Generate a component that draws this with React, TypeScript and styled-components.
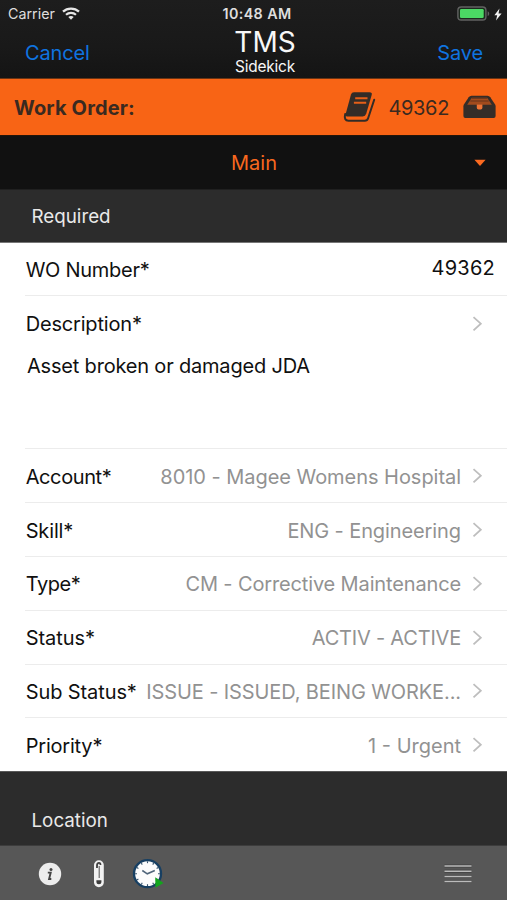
import React from 'react';
import styled, { createGlobalStyle } from 'styled-components';

const GlobalStyle = createGlobalStyle`
  * { box-sizing: border-box; }
  body { margin: 0; background: #fff; }
  svg { display: block; flex: none; }
`;

const Screen = styled.main`
  width: 507px;
  height: 900px;
  display: flex;
  flex-direction: column;
  overflow: hidden;
  font-family: Inter, 'Liberation Sans', sans-serif;
  font-size: 20px;
  line-height: 24px;
  white-space: nowrap;
  color: #101010;
`;

const Header = styled.header`
  height: 79px;
  flex: none;
  background: linear-gradient(#1d1d1d, #191919 60%, #141414);
  border-bottom: 1px solid #6b3413;
`;

const StatusBar = styled.div`
  height: 27px;
  display: grid;
  grid-template-columns: 1fr auto 1fr;
  align-items: center;
  padding: 1px 5px 0 8px;
  font-size: 14.3px;
  line-height: 18px;
  color: #dedede;
`;

const StatusGroup = styled.div<{ $end?: boolean }>`
  display: flex;
  align-items: center;
  gap: ${(p) => (p.$end ? 4 : 7)}px;
  justify-content: ${(p) => (p.$end ? 'flex-end' : 'flex-start')};
`;

const Clock = styled.span`
  padding-left: 4px;
  font-weight: 600;
  letter-spacing: 0.4px;
`;

const NavBar = styled.nav`
  height: 51px;
  display: grid;
  grid-template-columns: 1fr auto 1fr;
  padding: 0 24px 0 25px;
`;

const NavButton = styled.button<{ $end?: boolean }>`
  justify-self: ${(p) => (p.$end ? 'end' : 'start')};
  height: 51px;
  padding: 0;
  border: 0;
  background: none;
  font: inherit;
  letter-spacing: -0.15px;
  color: #0f74e0;
`;

const TitleStack = styled.div`
  display: flex;
  flex-direction: column;
  align-items: center;
  padding-left: 22px;
  color: #f7f7f7;
`;

const Title = styled.h1`
  margin: 0;
  font-size: 28px;
  line-height: 30px;
  font-weight: 400;
  letter-spacing: 0;
`;

const Subtitle = styled.span`
  font-size: 15.4px;
  line-height: 18px;
  margin-top: 1px;
  letter-spacing: -0.2px;
`;

const OrderBar = styled.section`
  height: 56px;
  flex: none;
  display: flex;
  align-items: center;
  padding: 0 11px 0 14px;
  background: #f86415;
  color: #3a2a20;
`;

const OrderTitle = styled.h2`
  flex: 1;
  margin: 0;
  padding-top: 1px;
  font-size: 20px;
  font-weight: 700;
  letter-spacing: 0.15px;
`;

const OrderNumber = styled.span`
  margin: 0 14px 0 12px;
  padding-top: 1px;
  letter-spacing: -0.35px;
`;

const TabPicker = styled.div`
  height: 54px;
  flex: none;
  display: grid;
  grid-template-columns: 1fr auto 1fr;
  align-items: center;
  padding: 1px 21px 0 22px;
  background: #111;
  border-top: 1px solid #241509;
  color: #f8681f;
  svg { justify-self: end; }
`;

const SectionHeader = styled.h3<{ $tall?: boolean }>`
  height: ${(p) => (p.$tall ? 75 : 54)}px;
  flex: none;
  margin: 0;
  padding: ${(p) => (p.$tall ? '37px' : '15px')} 0 0 31.5px;
  background: #2c2c2c;
  border-top: 1px solid ${(p) => (p.$tall ? '#595959' : '#202020')};
  border-bottom: 1px solid ${(p) => (p.$tall ? '#3d3d3d' : '#777')};
  font-size: 18.8px;
  font-weight: 400;
  color: #e9e9e9;
`;

const Form = styled.div`
  flex: none;
  background: #fff;
`;

const Row = styled.div<{ $height: number; $last?: boolean }>`
  height: ${(p) => p.$height}px;
  margin-left: 25px;
  padding-right: 24px;
  display: flex;
  align-items: center;
  border-bottom: ${(p) => (p.$last ? 0 : 1)}px solid #ececec;
`;

const Label = styled.span<{ $tracking?: number; $drop?: number }>`
  flex: 1;
  padding: ${(p) => p.$drop ?? 1}px 0 0 0.7px;
  letter-spacing: ${(p) => p.$tracking ?? 0}px;
`;

const Value = styled.span<{ $tracking?: number; $drop?: number }>`
  padding-top: ${(p) => p.$drop ?? 1}px;
  margin-right: 11px;
  letter-spacing: ${(p) => p.$tracking ?? 0}px;
  color: #929292;
`;

const NumberValue = styled.span`
  margin: 0 -12px 2px 0;
  letter-spacing: 0.25px;
`;

const DescriptionBlock = styled.div`
  height: 153px;
  margin-left: 25px;
  border-bottom: 1px solid #ececec;
`;

const DescriptionHead = styled.div`
  height: 56px;
  display: flex;
  align-items: center;
  padding-right: 24px;
`;

const DescriptionText = styled.p`
  margin: 2px 0 0 2px;
  letter-spacing: -0.19px;
`;

const Toolbar = styled.footer`
  flex: 1;
  display: flex;
  align-items: center;
  padding: 2px 35px 0 38px;
  background: #575757;
`;

const ToolButton = styled.button<{ $before?: number; $push?: boolean }>`
  padding: 0;
  border: 0;
  background: none;
  margin-left: ${(p) => (p.$push ? 'auto' : `${p.$before ?? 0}px`)};
`;

const WifiIcon = () => (
  <svg width="18" height="15" viewBox="0 0 18 15" fill="none" stroke="#e6e6e6">
    <path d="M1 4.6C5.4.5 12.6.5 17 4.6" strokeWidth="2.3" />
    <path d="M4 7.8c2.8-2.5 7.2-2.500 10 0" strokeWidth="2.200" />
    <path d="M6.300 10c1.500-1.300 3.900-1.300 5.400 0L9 12.800z" fill="#e6e6e6" stroke="none" />
  </svg>
);

const BatteryIcon = () => (
  <svg width="33" height="16" viewBox="0 0 33 16">
    <rect x=".9" y="1" width="28" height="13" rx="3.300" fill="#1c2a1e" stroke="#626262" strokeWidth="1.400" />
    <rect x="3" y="3" width="23.700" height="9" rx="1.300" fill="#4bd964" />
    <path d="M30.700 5.200c2 .8 2 4 0 4.800z" fill="#626262" />
  </svg>
);

const BoltIcon = () => (
  <svg width="8" height="13" viewBox="0 0 8 13">
    <path d="M5.500.5.4 7.200h2.800L2 12.500 7.600 5.400H4.500z" fill="#f2f2f2" />
  </svg>
);

const BookIcon = () => (
  <svg width="33" height="32" viewBox="0 0 33 32">
    <path
      d="M11 1.200H26.500q3 0 2.200 2.800L23.200 22.800q-.8 2.600-3.500 2.600H4.200q-2.200 0-1.600-2.200L8 3.500Q8.700 1.200 11 1.200z"
      fill="#332c27"
    />
    <path
      d="M2.200 23q-1.600 6.700 3.300 6.700h16.300q2.500 0 3.300-2.500L31.200 8.800"
      fill="none"
      stroke="#332c27"
      strokeWidth="2"
      strokeLinecap="round"
    />
    <path d="M12.200 7.200h12.300M10.900 11.800h12.300" stroke="#e65f18" strokeWidth="1.900" />
  </svg>
);

const InboxIcon = () => (
  <svg width="33" height="24" viewBox="0 0 33 24">
    <path
      d="M8.500.7h16q1.800 0 2.800 1.500l4.800 7.300q.5.800.5 2v9.500q0 2-2 2H2.400q-2 0-2-2v-9.500q0-1.200.5-2l4.800-7.300Q6.700.7 8.500.7z"
      fill="#352d28"
    />
    <path d="M8.800 2.800h15.400l4.600 7H4.200z" fill="#a24b1d" />
    <path d="M8.800 3.300h15.400M7.300 6h18.400" stroke="#66351d" strokeWidth="1" />
    <path d="M13.800 9.500h5.600v3.300q0 1.700-1.700 1.700h-2.200q-1.700 0-1.700-1.700z" fill="#f07434" />
  </svg>
);

const CaretIcon = () => (
  <svg width="12" height="8" viewBox="0 0 12 8">
    <path d="M.4.700h11.200L6 7z" fill="#fb6a20" />
  </svg>
);

const ChevronIcon = () => (
  <svg width="11" height="18" viewBox="0 0 11 18">
    <path d="M1.500 2.200 8.800 8.700 1.500 15.300" fill="none" stroke="#bebebe" strokeWidth="1.800" />
  </svg>
);

const InfoIcon = () => (
  <svg width="24" height="24" viewBox="0 0 24 24">
    <circle cx="12" cy="12" r="11.200" fill="#ededed" />
    <circle cx="13" cy="7.400" r="1.500" fill="#444" />
    <path d="M9.800 10.600h2.900l-1.600 6.400h2.200" fill="none" stroke="#444" strokeWidth="1.900" />
  </svg>
);

const ClipIcon = () => (
  <svg width="12" height="30" viewBox="0 0 12 30">
    <rect x="1" y="1.200" width="9.800" height="27" rx="4.900" fill="#f2f2f2" />
    <path d="M4 9V6.400q0-2.600 2-2.600 1.500 0 1.500 2.200" fill="none" stroke="#414141" strokeWidth="1.800" />
    <path d="M6.200 7v12" stroke="#606060" strokeWidth="1.100" />
    <path d="M3.400 21.300h5v1.500q0 2.500-2.500 2.500t-2.500-2.500z" fill="#3d3d3d" />
  </svg>
);

const TICKS = Array.from({ length: 12 }, (_, i) => i * 30);

const ClockIcon = () => (
  <svg width="32" height="30" viewBox="0 0 32 30">
    <circle cx="15.500" cy="14.700" r="13.500" fill="#fcfcfc" stroke="#173f62" strokeWidth="2.300" />
    {TICKS.map((a) => (
      <path key={a} d="M15.500 2.300v1.900" stroke="#38546d" strokeWidth="1.100" transform={`rotate(${a} 15.500 14.700)`} />
    ))}
    <path d="m10.300 11.500 5 3.300 7.500-3.300" fill="none" stroke="#50657a" strokeWidth="1.500" />
    <path d="M23.200 18.200 31.500 24l-8 4.800z" fill="#12a51c" />
  </svg>
);

const MenuIcon = () => (
  <svg width="28" height="20" viewBox="0 0 28 20">
    <path d="M.5 2h27M.5 7.200h27M.5 12.400h27M.5 17.600h27" stroke="#424242" strokeWidth="3" />
    <path d="M.5 2h27M.5 7.200h27M.5 12.400h27M.5 17.600h27" stroke="#bbb" strokeWidth="1.500" />
  </svg>
);

const FIELDS = [
  { label: 'Account*', labelTracking: -0.4, value: '8010 - Magee Womens Hospital', tracking: -0.04, height: 54, drop: 3 },
  { label: 'Skill*', labelTracking: -0.15, value: 'ENG - Engineering', tracking: -0.1, height: 54, drop: 2 },
  { label: 'Type*', labelTracking: -0.45, value: 'CM - Corrective Maintenance', tracking: -0.14, height: 54, drop: 1 },
  { label: 'Status*', labelTracking: -0.05, value: 'ACTIV - ACTIVE', tracking: -0.2, height: 54, drop: 1 },
  { label: 'Sub Status*', labelTracking: -0.1, value: 'ISSUE - ISSUED, BEING WORKE...', tracking: -0.11, height: 53, drop: 1 },
  { label: 'Priority*', labelTracking: -0.2, value: '1 - Urgent', tracking: 0, height: 53, drop: 2 },
];

export default function App() {
  return (
    <>
      <GlobalStyle />
      <Screen>
        <Header>
          <StatusBar>
            <StatusGroup>
              <span>Carrier</span>
              <WifiIcon />
            </StatusGroup>
            <Clock>10:48 AM</Clock>
            <StatusGroup $end>
              <BatteryIcon />
              <BoltIcon />
            </StatusGroup>
          </StatusBar>
          <NavBar>
            <NavButton>Cancel</NavButton>
            <TitleStack>
              <Title>TMS</Title>
              <Subtitle>Sidekick</Subtitle>
            </TitleStack>
            <NavButton $end>Save</NavButton>
          </NavBar>
        </Header>
        <OrderBar>
          <OrderTitle>Work Order:</OrderTitle>
          <BookIcon />
          <OrderNumber>49362</OrderNumber>
          <InboxIcon />
        </OrderBar>
        <TabPicker>
          <span />
          <span>Main</span>
          <CaretIcon />
        </TabPicker>
        <SectionHeader>Required</SectionHeader>
        <Form>
          <Row $height={53}>
            <Label $tracking={-0.28}>WO Number*</Label>
            <NumberValue>49362</NumberValue>
          </Row>
          <DescriptionBlock>
            <DescriptionHead>
              <Label $tracking={-0.18} $drop={0}>Description*</Label>
              <ChevronIcon />
            </DescriptionHead>
            <DescriptionText>Asset broken or damaged JDA</DescriptionText>
          </DescriptionBlock>
          {FIELDS.map((f, i) => (
            <Row key={f.label} $height={f.height} $last={i === FIELDS.length - 1}>
              <Label $tracking={f.labelTracking} $drop={f.drop}>{f.label}</Label>
              <Value $tracking={f.tracking} $drop={f.drop}>{f.value}</Value>
              <ChevronIcon />
            </Row>
          ))}
        </Form>
        <SectionHeader $tall>Location</SectionHeader>
        <Toolbar>
          <ToolButton aria-label="Information"><InfoIcon /></ToolButton>
          <ToolButton aria-label="Attachments" $before={31}><ClipIcon /></ToolButton>
          <ToolButton aria-label="Start timer" $before={27}><ClockIcon /></ToolButton>
          <ToolButton aria-label="Menu" $push><MenuIcon /></ToolButton>
        </Toolbar>
      </Screen>
    </>
  );
}
